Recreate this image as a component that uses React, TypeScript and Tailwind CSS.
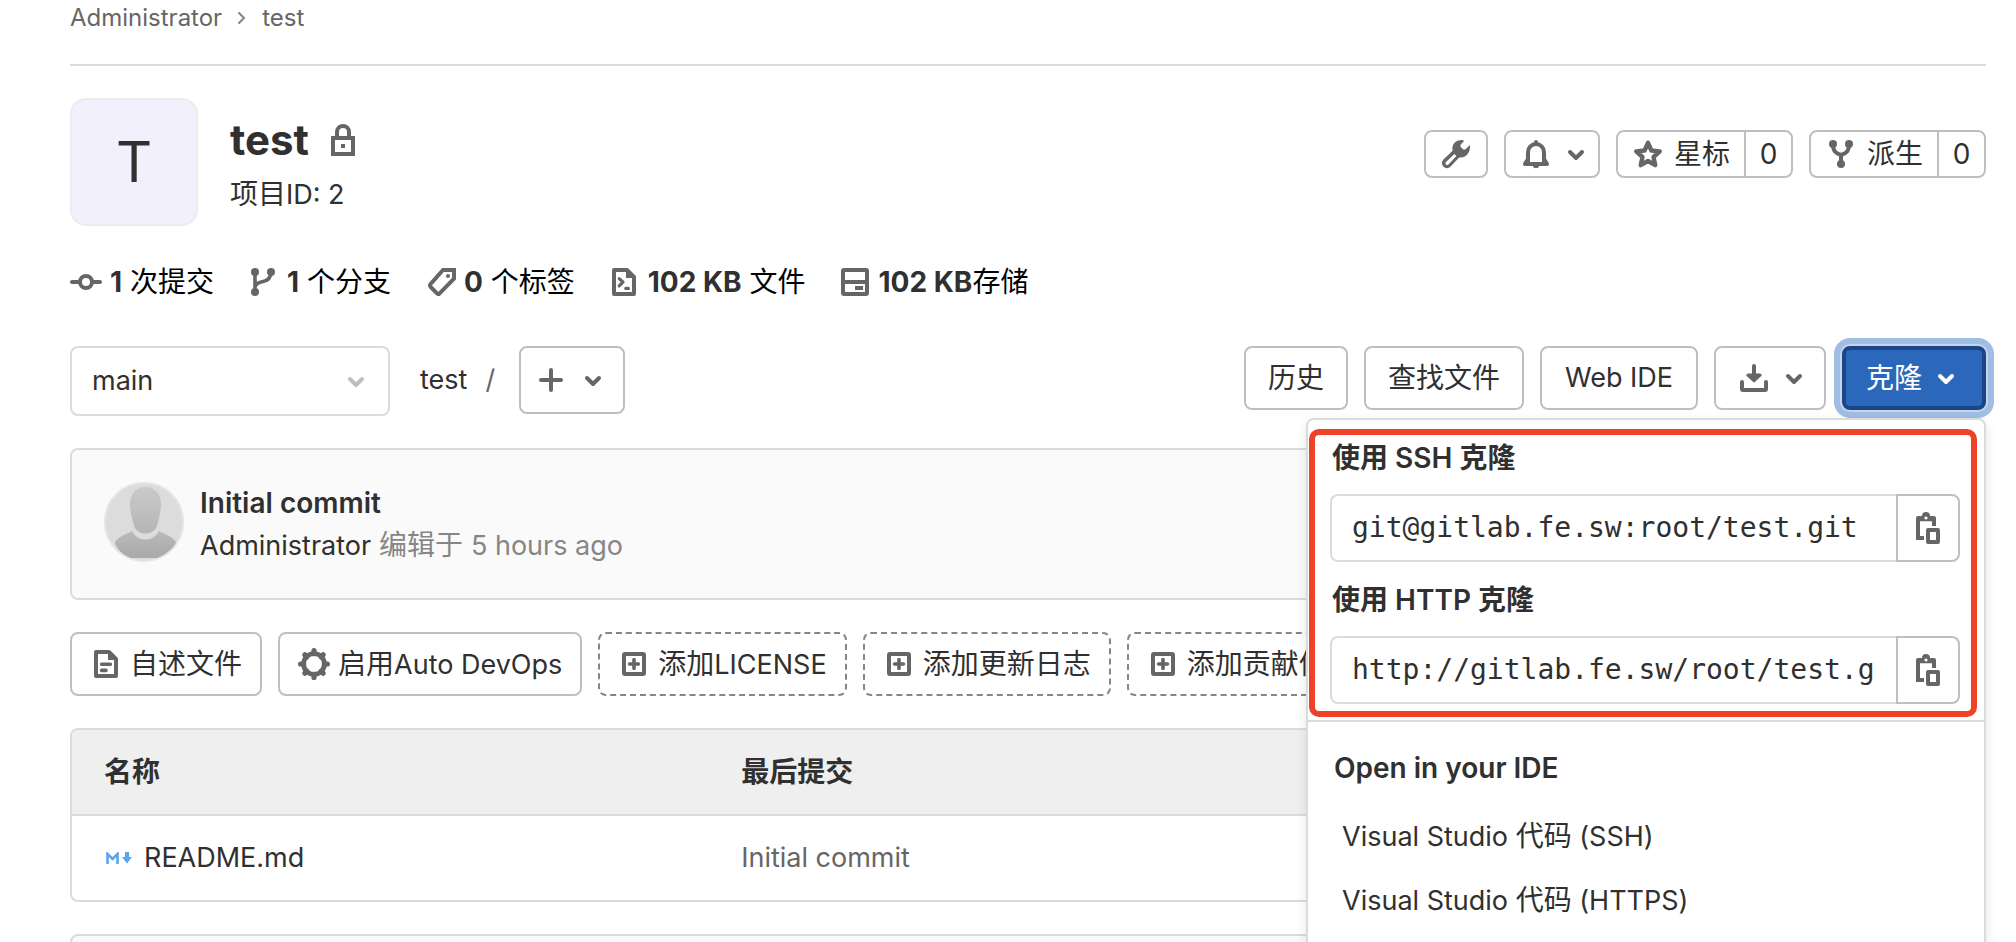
import { useState } from "react";
import type { ReactNode } from "react";

const FONT = "font-['Inter','Noto_Sans_CJK_SC',sans-serif]";

function Icon({ children, className = "text-[#666666]" }: { children: ReactNode; className?: string }) {
  return (
    <svg
      aria-hidden="true"
      viewBox="0 0 16 16"
      className={`size-8 shrink-0 ${className}`}
      fill="none"
      stroke="currentColor"
      strokeWidth="2"
    >
      {children}
    </svg>
  );
}

// Sets Latin runs slightly smaller than the Chinese text around them.
function Mixed({ text }: { text: string }) {
  return (
    <span className="whitespace-pre">
      {text.split(/([ -~]+)/).map((run, i) =>
        i % 2 ? (
          <span key={i} className="text-[27px]">
            {run}
          </span>
        ) : (
          run
        ),
      )}
    </span>
  );
}

const ChevronDown = ({ className }: { className?: string }) => (
  <Icon className={className}>
    <path d="M5 7l3 3 3-3" strokeLinecap="round" strokeLinejoin="round" />
  </Icon>
);

const LockIcon = () => (
  <Icon>
    <rect x="3" y="7" width="10" height="8" />
    <path d="M5 6.500V4a3 3 0 0 1 6 0v2.500" />
    <rect x="7" y="10" width="2" height="2" fill="currentColor" stroke="none" />
  </Icon>
);

const CommitIcon = () => (
  <Icon>
    <circle cx="8" cy="8" r="3" />
    <path d="M1 8h3.500M11.500 8H15" strokeLinecap="round" />
  </Icon>
);

const BranchIcon = () => (
  <Icon>
    <g fill="currentColor" stroke="none">
      <circle cx="4" cy="3" r="2" />
      <circle cx="4" cy="13" r="2" />
      <circle cx="12" cy="3" r="2" />
    </g>
    <path d="M4 3v10M12 3c0 3-1.600 4.400-4.400 4.900C5.600 8.300 4.500 8.800 4 10.500" strokeWidth="1.800" />
  </Icon>
);

const TagIcon = () => (
  <Icon>
    <path d="M9.500 2H15v4.300L7.800 13.700q-.700.600-1.300 0L3.300 10.400q-.600-.700 0-1.400z" />
    <circle cx="12" cy="5" r="1" fill="currentColor" stroke="none" />
  </Icon>
);

const DocOutline = () => (
  <>
    <path d="M3 2h6.500L13 5.500V14H3z" strokeLinejoin="round" />
    <path d="M9 1.500V6h4.500z" fill="currentColor" stroke="none" />
  </>
);

const CodeFileIcon = () => (
  <Icon>
    <DocOutline />
    <path d="M5.600 6.300l1.900 1.800-1.900 1.800" strokeWidth="1.600" strokeLinecap="round" strokeLinejoin="round" />
    <path d="M8.900 11.200h1.300" strokeWidth="1.600" strokeLinecap="round" />
  </Icon>
);

const DocIcon = () => (
  <Icon>
    <DocOutline />
    <path d="M5.800 8.100h4.400M5.800 11.200h2.200" strokeWidth="1.800" strokeLinecap="round" />
  </Icon>
);

const DiskIcon = () => (
  <Icon>
    <rect x="2" y="2" width="12" height="12" rx="0.500" />
    <path d="M2 8h12" />
    <rect x="8" y="10" width="4" height="2" fill="currentColor" stroke="none" />
  </Icon>
);

const WrenchIcon = () => (
  <Icon>
    <path
      fill="currentColor"
      stroke="none"
      fillRule="evenodd"
      d="M11 1C7.600.900 5.700 3.500 6.300 6.400L1.700 10.700a2.500 2.500 0 0 0 0 3.600 2.500 2.500 0 0 0 3.600 0L9.600 9.700c3 .500 5.700-2 5.400-6.200L12.900 5.500c-.500.400-1.100.400-1.500 0l-.900-.900c-.400-.400-.400-1 0-1.500L11.900 1.600Q11.900 1 11 1zM3 12l4.200-4 1 1-4 4.200q-.600.500-1.200 0-.600-.600 0-1.200z"
    />
  </Icon>
);

const BellIcon = () => (
  <Icon>
    <path d="M4 12.500V7a4 4 0 0 1 8 0v5.500" />
    <path
      fill="currentColor"
      stroke="none"
      d="M7 2.500V2a1 1 0 0 1 2 0v.500zM3 10.200L1.700 12.400Q1 14 2.500 14H6.300Q6.800 15.100 8 15.100T9.700 14h3.800q1.500 0 .800-1.600L13 10.200 12 12H4z"
    />
  </Icon>
);

const StarIcon = () => (
  <Icon>
    <path
      d="M8 2.400l1.700 3.850 4.200.450-3.140 2.800.880 4.100L8 11.500l-3.640 2.100.880-4.100L2.100 6.700l4.200-.450z"
      strokeWidth="2.200"
      strokeLinejoin="round"
    />
  </Icon>
);

const ForkIcon = () => (
  <Icon>
    <g fill="currentColor" stroke="none">
      <circle cx="4" cy="3" r="2" />
      <circle cx="12" cy="3" r="2" />
      <circle cx="8" cy="13" r="2" />
    </g>
    <path d="M4 3c0 3.600 1.200 4.500 4 5.500M12 3c0 3.600-1.200 4.500-4 5.500M8 8v5" />
  </Icon>
);

const PlusIcon = () => (
  <Icon>
    <path d="M8 3v10M3 8h10" strokeLinecap="round" />
  </Icon>
);

const DownloadIcon = () => (
  <Icon>
    <path d="M2 10v3.500q0 .500.500.500h11q.500 0 .500-.500V10M8 2v6" strokeLinecap="round" />
    <path d="M5 6.500h6L8 9.300z" fill="currentColor" strokeWidth="1.600" strokeLinejoin="round" />
  </Icon>
);

const GearIcon = () => (
  <Icon>
    <circle cx="8" cy="8" r="5.200" strokeWidth="2.400" />
    <path
      d="M8 1.300v1.500M8 13.200v1.500M1.300 8h1.500M13.200 8h1.500M3.400 3.400l1 1M11.600 11.600l1 1M3.400 12.600l1-1M11.600 4.400l1-1"
      strokeWidth="2.600"
      strokeLinecap="round"
    />
  </Icon>
);

const PlusSquareIcon = () => (
  <Icon>
    <rect x="3" y="3" width="10" height="10" rx="0.500" />
    <path d="M8 5.800v4.400M5.800 8h4.400" strokeWidth="1.800" strokeLinecap="round" />
  </Icon>
);

const CopyIcon = () => (
  <Icon>
    <path d="M6 13H3V4M11 4v3" />
    <path
      fill="currentColor"
      stroke="none"
      fillRule="evenodd"
      d="M3 2h2a2 2 0 0 1 4 0h2q1 0 1 1v1.600H2V3q0-1 1-1zM7 2.200a.8.800 0 1 0 .010 0z"
    />
    <rect x="8" y="9" width="5" height="6" strokeLinejoin="round" />
  </Icon>
);

const MarkdownIcon = () => (
  <svg aria-hidden="true" viewBox="0 0 28 12" className="h-3 w-7 shrink-0 text-[#5ba4ee]" fill="none" stroke="currentColor">
    <path d="M3.500 12V2l5 5 5-5v10" strokeWidth="2.600" />
    <path d="M21 0h4v5h3l-5 6.500L18 5h3z" fill="currentColor" stroke="none" />
  </svg>
);

const UserAvatar = () => (
  <svg role="img" aria-label="Administrator" viewBox="0 0 80 80" className="size-20 shrink-0">
    <defs>
      <linearGradient id="head" x1="0" y1="0" x2="0" y2="1">
        <stop offset="0" stopColor="#cacaca" />
        <stop offset="1" stopColor="#b5b5b5" />
      </linearGradient>
      <linearGradient id="body" x1="0" y1="0" x2="0" y2="1">
        <stop offset="0" stopColor="#bababa" />
        <stop offset="1" stopColor="#a9a9a9" />
      </linearGradient>
    </defs>
    <circle cx="40" cy="40" r="39" fill="#dcdcdc" stroke="#e4e4e4" strokeWidth="2" />
    <path d="M41.500 5C51 5 57 12 57 22c0 7-2.500 17-4.500 23-1.500 4-6 6.500-11 6.500S32 49 30.500 45C28.500 39 26 29 26 22 26 12 32 5 41.500 5z" fill="url(#head)" />
    <path d="M28 49c3 5.500 7.500 8.500 13.500 8.500S52 54.500 55 49c6 3.500 15 6 17 11.500C69 67 61 73 53 76H27C19 73 12 67 11 60.500 13 55 22 52.500 28 49z" fill="url(#body)" />
  </svg>
);

const OUTLINE = "flex items-center rounded-lg border-2 border-[#bfbfbf] bg-white text-[#303030]";

function Stat({ icon, value, label }: { icon: ReactNode; value: string; label: string }) {
  return (
    <li>
      <a href="#stat" className="flex h-8 items-center gap-2 whitespace-pre text-black">
        {icon}
        <span>
          <strong className="font-bold text-[#303030]">{value}</strong>
          {label}
        </span>
      </a>
    </li>
  );
}

function CountButton({ icon, label, count }: { icon: ReactNode; label: string; count: number }) {
  return (
    <div className={`${OUTLINE} h-12`}>
      <button type="button" className="flex h-full items-center gap-2.5 px-3.5">
        {icon}
        {label}
      </button>
      <a href="#count" className="flex h-full w-[47px] items-center justify-center border-l-2 border-[#bfbfbf]">
        {count}
      </a>
    </div>
  );
}

function CloneField({ id, label, url }: { id: string; label: string; url: string }) {
  return (
    <div className="flex flex-col gap-[18px]">
      <label htmlFor={id} className="pl-0.5 leading-9 font-semibold">
        {label}
      </label>
      <div className="flex h-[68px]">
        <input
          id={id}
          readOnly
          value={url}
          className="min-w-0 flex-1 rounded-l-lg border-2 border-r-0 border-[#dbdbdb] bg-white px-5 font-['DejaVu_Sans_Mono',monospace] text-[28px]"
        />
        <button
          type="button"
          aria-label="复制网址"
          className="flex w-16 items-center justify-center rounded-r-lg border-2 border-[#bfbfbf]"
        >
          <CopyIcon />
        </button>
      </div>
    </div>
  );
}

const ADD_FILES = ["添加LICENSE", "添加更新日志", "添加贡献信息"];
const IDE_LINKS = ["Visual Studio 代码 (SSH)", "Visual Studio 代码 (HTTPS)"];

export default function App() {
  const [open, setOpen] = useState(true);

  return (
    <main className={`h-screen overflow-hidden bg-white pr-[30px] pl-[70px] text-[28px] leading-9 text-[#303030] ${FONT}`}>
      <nav aria-label="Breadcrumb" className="flex items-center border-b-2 border-[#dbdbdb] pb-7 text-2xl leading-9 text-[#666666]">
        <a href="#admin">Administrator</a>
        <svg aria-hidden="true" viewBox="0 0 8 12" className="mr-4 ml-4 h-3 w-2 text-[#868686]" fill="none" stroke="currentColor" strokeWidth="2">
          <path d="M1 1l5 5-5 5" strokeLinecap="round" strokeLinejoin="round" />
        </svg>
        <a href="#test">test</a>
      </nav>

      <header className="mt-8 flex items-start">
        <div className="flex size-32 items-center justify-center rounded-2xl border-2 border-[#ececec] bg-[#f1f0fc] text-[56px]">
          T
        </div>
        <div className="ml-8 pt-[18px]">
          <div className="flex h-12 items-center gap-[18px]">
            <h1 className="text-[42px] font-bold">test</h1>
            <LockIcon />
          </div>
          <p className="mt-3">
            <Mixed text="项目ID: 2" />
          </p>
        </div>
        <div className="mt-8 ml-auto flex gap-4">
          <button type="button" aria-label="管理" className={`${OUTLINE} h-12 px-3.5`}>
            <WrenchIcon />
          </button>
          <button type="button" aria-label="通知" className={`${OUTLINE} h-12 gap-2 pr-1.5 pl-3.5`}>
            <BellIcon />
            <ChevronDown />
          </button>
          <CountButton icon={<StarIcon />} label="星标" count={0} />
          <CountButton icon={<ForkIcon />} label="派生" count={0} />
        </div>
      </header>

      <ul className="mt-10 flex gap-[33px]">
        <Stat icon={<CommitIcon />} value="1" label=" 次提交" />
        <Stat icon={<BranchIcon />} value="1" label=" 个分支" />
        <Stat icon={<TagIcon />} value="0" label=" 个标签" />
        <Stat icon={<CodeFileIcon />} value="102 KB" label=" 文件" />
        <Stat icon={<DiskIcon />} value="102 KB" label="存储" />
      </ul>

      <div className="mt-12 flex items-start">
        <div className="relative w-80">
          <select aria-label="分支" className="h-[70px] w-full appearance-none rounded-lg border-2 border-[#dbdbdb] bg-white px-5 text-[27px]">
            <option>main</option>
          </select>
          <span className="pointer-events-none absolute inset-y-0 right-[18px] flex items-center">
            <ChevronDown className="text-[#bfbfbf]" />
          </span>
        </div>
        <div className="ml-[30px] flex h-[68px] items-center text-[27px]">
          <a href="#test">test</a>
          <span className="ml-[18px] text-[#666666]">/</span>
        </div>
        <button type="button" aria-label="添加" className={`${OUTLINE} ml-6 h-[68px] gap-2.5 px-3.5`}>
          <PlusIcon />
          <ChevronDown />
        </button>

        <div className="ml-auto flex gap-4">
          <button type="button" className={`${OUTLINE} h-16 px-[22px]`}>历史</button>
          <button type="button" className={`${OUTLINE} h-16 px-[22px]`}>查找文件</button>
          <button type="button" className={`${OUTLINE} h-16 px-[23px] text-[27px]`}>Web IDE</button>
          <button type="button" aria-label="下载" className={`${OUTLINE} h-16 gap-2 pr-3.5 pl-[22px]`}>
            <DownloadIcon />
            <ChevronDown />
          </button>
          <div className="relative">
            <button
              type="button"
              aria-expanded={open}
              onClick={() => setOpen(!open)}
              className="flex h-16 items-center gap-2 rounded-lg border-4 border-[#1b4584] bg-[#2b67ba] px-5 text-white shadow-[0_0_0_2px_#c6d5ee,0_0_0_8px_#a0bde4]"
            >
              克隆
              <ChevronDown className="text-white" />
            </button>
            {open && (
              <div className="absolute top-full right-0 z-10 mt-2 w-[680px] rounded-lg border-2 border-[#dbdbdb] bg-white pb-4 shadow-[0_4px_12px_rgba(0,0,0,0.1)]">
                <div className="relative flex flex-col gap-5 border-b-2 border-[#dbdbdb] pt-5 pr-6 pb-4 pl-[22px]">
                  <CloneField id="clone-ssh" label="使用 SSH 克隆" url="git@gitlab.fe.sw:root/test.git" />
                  <CloneField id="clone-http" label="使用 HTTP 克隆" url="http://gitlab.fe.sw/root/test.git" />
                  <div
                    aria-hidden="true"
                    className="pointer-events-none absolute top-[9px] right-[7px] bottom-[3px] left-px rounded-[10px] border-[6px] border-[#ee4127]"
                  />
                </div>
                <h2 className="px-[26px] pt-7 pb-[18px] font-semibold">Open in your IDE</h2>
                <ul className="px-[34px]">
                  {IDE_LINKS.map((name) => (
                    <li key={name}>
                      <a href="#ide" className="flex h-16 items-center">
                        <Mixed text={name} />
                      </a>
                    </li>
                  ))}
                </ul>
              </div>
            )}
          </div>
        </div>
      </div>

      <section className="mt-8 flex gap-4 rounded-lg border-2 border-[#dbdbdb] bg-[#fafafa] p-8">
        <UserAvatar />
        <div className="h-[84px] leading-[42px]">
          <a href="#commit" className="font-semibold">Initial commit</a>
          <p className="text-[#868686]">
            <a href="#admin" className="text-[27px] text-[#303030]">Administrator</a> 编辑于 <time className="text-[27px]">5 hours ago</time>
          </p>
        </div>
      </section>

      <div className="mt-8 flex gap-4">
        <button type="button" className={`${OUTLINE} h-16 gap-2 px-[18px]`}>
          <DocIcon />
          <Mixed text="自述文件" />
        </button>
        <button type="button" className={`${OUTLINE} h-16 gap-2 px-[18px]`}>
          <GearIcon />
          <Mixed text="启用Auto DevOps" />
        </button>
        {ADD_FILES.map((name) => (
          <button
            key={name}
            type="button"
            className="flex h-16 items-center gap-2 rounded-lg border-2 border-dashed border-[#868686] bg-white px-[18px]"
          >
            <PlusSquareIcon />
            <Mixed text={name} />
          </button>
        ))}
      </div>

      <div className="mt-8 overflow-hidden rounded-lg border-2 border-[#dbdbdb]">
        <table className="w-full table-fixed border-collapse text-left">
          <thead className="border-b-2 border-[#dbdbdb] bg-[#efefef]">
            <tr className="h-[85px]">
              <th className="w-[35%] pl-8 font-bold">名称</th>
              <th className="font-bold">最后提交</th>
            </tr>
          </thead>
          <tbody>
            <tr className="h-[85px] text-[27px]">
              <td className="pl-8">
                <a href="#readme" className="flex items-center gap-3">
                  <MarkdownIcon />
                  README.md
                </a>
              </td>
              <td className="text-[#666666]">Initial commit</td>
            </tr>
          </tbody>
        </table>
      </div>

      <section aria-label="README.md" className="mt-8 h-24 rounded-lg border-2 border-[#dbdbdb] bg-[#fafafa]" />
    </main>
  );
}
